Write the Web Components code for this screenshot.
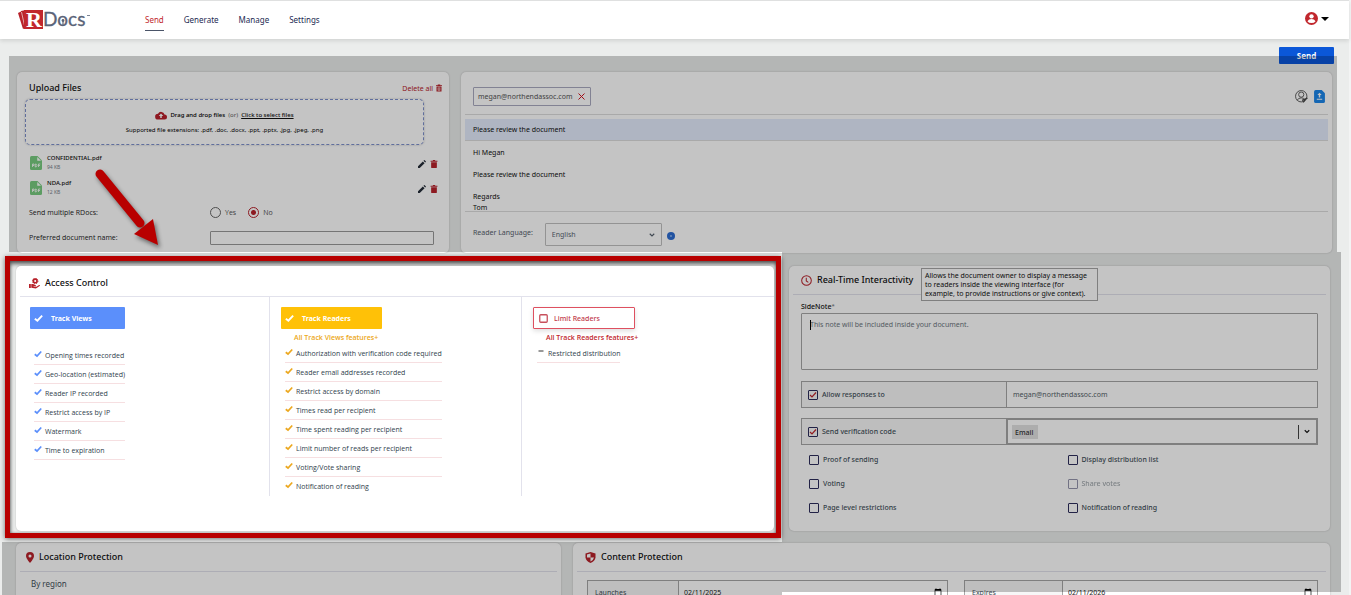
<!DOCTYPE html>
<html lang="en">
<head>
<meta charset="utf-8">
<title>RDocs – Send</title>
<style>
html{scrollbar-width:none;background:#ebedec}
body{margin:0;font-family:"Noto Sans","Open Sans",sans-serif;font-size:7px;line-height:11px;color:#111}
</style>
</head>
<body>
<rd-app></rd-app>
<script>
const base=`*{box-sizing:border-box}:host{display:block}button,input,select,textarea{font:inherit;color:inherit;margin:0}button{cursor:pointer}p,h2,ul{margin:0;padding:0}`;
function define(name,css,html,setup){
  const t=document.createElement('template');
  t.innerHTML=`<style>${base}${css}</style>${html}`;
  customElements.define(name,class extends HTMLElement{
    constructor(){super();this.attachShadow({mode:'open'}).append(t.content.cloneNode(true));}
    connectedCallback(){if(setup)setup(this,this.shadowRoot);}
  });
}
const icons={
  cloud:['0 0 24 16','<path fill="#b9202b" d="M19 6A7 7 0 0 0 6 4.500A5.600 5.600 0 0 0 6 16H19A5 5 0 0 0 19 6Z"/><path fill="#fff" d="M12 4L7.500 9H10.500V13H13.500V9H16.500Z"/>'],
  trash:['0 0 12 14','<path fill="currentColor" d="M1 4H11V12.500Q11 14 9.500 14H2.500Q1 14 1 12.500ZM0 1.500H3.500L4.500 0H7.500L8.500 1.500H12V3H0Z"/>'],
  trashbox:['0 0 12 14','<path fill="currentColor" fill-rule="evenodd" d="M1 4H11V14H1ZM3.500 6V12H8.500V6ZM0 1.300H3.500V0H8.500V1.300H12V3.200H0Z"/><path fill="currentColor" d="M5 6H7V11H5Z"/>'],
  pencil:['0 0 14 14','<path fill="#252d38" d="M0 14V11L8.500 2.500L11.500 5.500L3 14ZM9.500 1.500L10.700 .4Q11.200 0 11.700 .4L13.600 2.300Q14 2.800 13.600 3.300L12.500 4.500Z"/>'],
  pdf:['0 0 24 28','<path fill="#78cc80" d="M3 0H15L24 9V25Q24 28 21 28H3Q0 28 0 25V3Q0 0 3 0Z"/><path fill="#fff" d="M14.500 2V9.500H22Z"/><path fill="none" stroke="#fff" stroke-width="1.600" d="M5 22V16H8V19H5M10.500 16V22Q14 22 14 19T10.500 16M17 22V16H20.500M17 19H20"/>'],
  check:['0 0 16 14','<path fill="none" stroke="currentColor" stroke-width="3.400" d="M1.500 7.500L6 11L14.500 2"/>'],
  dash:['0 0 16 14','<path fill="none" stroke="#333" stroke-width="2" d="M3 5H13"/>'],
  box:['0 0 18 18','<rect x="1.500" y="1.500" width="15" height="15" rx="2" fill="none" stroke="#c8505c" stroke-width="2.600"/>'],
  access:['0 0 24 24','<circle cx="13.500" cy="6.500" r="4" fill="none" stroke="currentColor" stroke-width="3.500"/><circle cx="13.500" cy="6.500" r="6" fill="none" stroke="currentColor" stroke-width="2" stroke-dasharray="2.500 2.200"/><path fill="currentColor" d="M0 13H4V22H0ZM5 13H9L15 16V18H10V19H16L22 15.500Q24 15 24 17L15 23L5 21Z"/>'],
  clock:['0 0 24 24','<circle cx="12" cy="12" r="10.500" fill="none" stroke="currentColor" stroke-width="2.200"/><path fill="none" stroke="currentColor" stroke-width="2.200" d="M11.500 6V13L16 16"/>'],
  pin:['0 0 16 22','<path fill="currentColor" fill-rule="evenodd" d="M8 0A8 8 0 0 0 0 8C0 13 8 22 8 22S16 13 16 8A8 8 0 0 0 8 0ZM8 5A3 3 0 0 1 8 11A3 3 0 0 1 8 5Z"/>'],
  shield:['0 0 20 22','<path fill="currentColor" d="M10 0L20 3V11Q19 18 10 22Q1 18 0 11V3Z"/><path fill="#fff" d="M10 3V11H3V5ZM10 11H17Q16 16 10 19Z"/>'],
  user:['0 0 24 24','<circle cx="12" cy="12" r="12" fill="#c1272d"/><circle cx="12" cy="8" r="4" fill="#fff"/><path fill="#fff" d="M4.500 17Q7 13 12 13T19.500 17Q17 20.500 12 20.500T4.500 17Z"/>'],
  x:['0 0 14 14','<path stroke="#d0101c" stroke-width="2" d="M1 1L13 13M13 1L1 13"/>'],
  contact:['0 0 24 24','<g fill="none" stroke="#555" stroke-width="1.700"><circle cx="11.500" cy="11.500" r="10.500"/><circle cx="11.500" cy="8.500" r="4.800"/><path d="M4 19Q6 14.500 11.500 14.500T18 18"/></g><path stroke="#444" stroke-width="2.400" d="M13 19L23 15M15 23L20 17"/>'],
  contactfile:['0 0 20 24','<path fill="#1c86ea" d="M3 0H14L20 6V21Q20 24 17 24H3Q0 24 0 21V3Q0 0 3 0Z"/><path fill="#fff" d="M10 5L14 9H11.300V14H8.700V9H6ZM5 16H15V18H5Z"/>'],
  info:['0 0 16 16','<circle cx="8" cy="8" r="8" fill="#2d6cd2"/><circle cx="8" cy="8" r="2" fill="#8fb7f0"/>'],
  chev:['0 0 12 8','<path fill="none" stroke="currentColor" stroke-width="2.200" d="M1.500 1.500L6 6L10.500 1.500"/>']
};
customElements.define('rd-icon',class extends HTMLElement{
  static observedAttributes=['name'];
  constructor(){super();this.attachShadow({mode:'open'});}
  attributeChangedCallback(){
    const [box,body]=icons[this.getAttribute('name')];
    this.shadowRoot.innerHTML=`<style>:host{display:inline-flex;flex:none}svg{width:100%;height:100%;display:block}</style><svg viewBox="${box}" aria-hidden="true">${body}</svg>`;
  }
});

define('rd-header',`
:host{position:relative;background:#fff;border-top:1px solid #dfe0e0;box-shadow:0 2px 4px #0000001c}
header{display:flex;align-items:center;height:38px;padding:0 20px 0 18px}
.logo{width:74px;height:22px;margin-right:53px;overflow:visible}
nav{display:flex;gap:20px;flex:1;font-size:8px;line-height:12px}
nav a{color:#232a52;text-decoration:none;padding:5px 0 4px;border-bottom:1px solid transparent}
nav a.on{color:#c1272d;border-color:#4a5468}
button{display:flex;align-items:center;gap:3px;border:0;background:none;padding:0}
rd-icon{width:13px;height:13px;margin-bottom:3px}
i{border:4px solid transparent;border-top-color:#000;border-bottom:0;margin-bottom:3px}
`,`<header>
<svg class="logo" viewBox="0 0 74 22" role="img" aria-label="RDocs"><path fill="#b8222b" d="M0 4L4 2L7 19L5 20ZM3 2L8 1V20L6 19Z"/><path stroke="#fff" stroke-width=".6" d="M3.500 3L7 19"/><rect x="6" y="1" width="19" height="19" fill="#c1272d"/><text x="8" y="18" font-family="Liberation Serif,serif" font-weight="700" font-size="22" fill="#fff">R</text><text x="25" y="17" font-family="Lato,sans-serif" font-size="19" fill="#5a6478" stroke="#5a6478" stroke-width=".3">Docs</text><circle cx="45" cy="11.500" r="1.400" fill="#5a6478"/><path stroke="#5a6478" stroke-width="1.200" d="M45 12V16"/><path stroke="#5a6478" stroke-width=".8" d="M69 6.500H72"/></svg>
<nav aria-label="Main"><a class="on" href="#send">Send</a><a href="#generate">Generate</a><a href="#manage">Manage</a><a href="#settings">Settings</a></nav>
<button type="button" aria-label="Account"><rd-icon name="user"></rd-icon><i></i></button>
</header>`);

define('rd-card',`
:host{background:#fff;border-radius:5px;box-shadow:0 0 2px #0000003a;min-width:0}
`,`<slot></slot>`);

define('rd-heading',`
:host{margin:0 4px;border-bottom:1px solid #e2e2ec}
h2{display:flex;align-items:center;gap:5px;font-size:9px;line-height:12px;font-weight:500;color:#111;padding:var(--pt,0) 8px 0 var(--pl,8px);height:var(--h,28px)}
rd-icon{width:var(--iw,11px);height:11px;color:#b8222b}
`,`<h2><rd-icon></rd-icon><slot></slot></h2>`,(h,r)=>{
  r.querySelector('rd-icon').setAttribute('name',h.getAttribute('icon'));
});

define('rd-file',`
:host{display:flex;align-items:center;height:25px;gap:5px}
.f{width:12px;height:14px}
div{flex:1;font-size:6px;line-height:9px;font-weight:500;color:#111}
small{display:block;font-size:5px;font-weight:400;color:#77808c}
button{border:0;background:none;padding:3px 0 0;display:flex;width:7px}
rd-icon{width:8px;height:8px;color:#b8222b}
`,`<rd-icon class="f" name="pdf"></rd-icon><div><slot></slot><small><slot name="size"></slot></small></div><button type="button" aria-label="Rename"><rd-icon name="pencil"></rd-icon></button><button type="button" aria-label="Delete"><rd-icon name="trash"></rd-icon></button>`);

define('rd-upload',`
:host{padding:0 12px}
.top{display:flex;justify-content:space-between;align-items:center;height:27px;padding-top:5px;margin-right:-5px}
h2{font-size:9px;font-weight:500;line-height:12px}
.del{border:0;background:none;padding:0;color:#b8222b;font-size:7px;display:flex;align-items:center;gap:3px}
.del rd-icon{width:6px;height:8px}
.drop{margin:0 13px 0 -4px;height:46px;border:1px dashed #7e90cc;border-radius:5px;box-shadow:0 0 2px #0004;font-size:6px;display:flex;flex-direction:column;align-items:center;justify-content:center;gap:4px;color:#000;padding-top:2px}
.drop p{display:flex;align-items:center;gap:3px}
.drop p:first-child{font-weight:500}
.drop p rd-icon{width:12px;height:9px}
.drop a{color:#111}
.drop span{color:#777}
.files{padding:5px 0 0 1px}
.row{display:grid;grid-template-columns:181px 1fr;align-items:center;height:25px;margin-right:3px;font-family:"Open Sans",sans-serif;font-weight:500;color:#222}
.radios{display:flex;gap:12px}
.radios label{display:flex;align-items:center;gap:4px;font-weight:400;color:#555}
[type=radio]{appearance:none;width:11px;height:11px;border:1px solid #666;border-radius:50%}
[type=radio]:checked{border-color:#b8222b;background:radial-gradient(#b8222b 0 2px,transparent 3px)}
[type=text]{width:100%;height:14px;border:1px solid #999;background:none;border-radius:1px}
`,`<div class="top"><h2>Upload Files</h2><button class="del" type="button">Delete all<rd-icon name="trashbox"></rd-icon></button></div>
<div class="drop"><p><rd-icon name="cloud"></rd-icon>Drag and drop files <span>(or)</span> <a href="#select">Click to select files</a></p><p>Supported file extensions: .pdf, .doc, .docx, .ppt, .pptx, .jpg, .jpeg, .png</p></div>
<div class="files"><rd-file>CONFIDENTIAL.pdf<span slot="size">94 KB</span></rd-file><rd-file>NDA.pdf<span slot="size">12 KB</span></rd-file></div>
<div class="row" role="radiogroup" aria-labelledby="m"><span id="m">Send multiple RDocs:</span><div class="radios"><label><input type="radio" name="multi">Yes</label><label><input type="radio" name="multi" checked>No</label></div></div>
<div class="row"><label for="n">Preferred document name:</label><input id="n" type="text"></div>`);

define('rd-message',`
:host{padding:0 4px}
.to{display:flex;align-items:center;height:43px;padding:6px 3px 0 8px;border-bottom:1px solid #dcdcdc;gap:6px}
.chip{display:flex;align-items:center;gap:6px;height:19px;border:1px solid #a9a9c0;border-radius:1px;padding:0 5px 0 4px;margin-right:auto;color:#555}
.chip button{border:0;background:none;padding:0;display:flex}
.chip rd-icon{width:7px;height:7px}
.ib{border:0;background:none;padding:0;display:flex}
.ib rd-icon{width:13px;height:13px}
.ib:last-child rd-icon{width:11px}
.subject{display:block;width:100%;height:22px;margin-top:4px;border:0;border-bottom:1px solid #dcdcdc;background:#e4ecfd;padding:0 8px;color:#111}
.body{height:71px;overflow:hidden;padding:6px 8px 0;border-bottom:1px solid #dcdcdc;outline:0}
.body p{margin-bottom:11px}
.lang{display:flex;align-items:center;height:38px;padding-left:8px;color:#55606c;padding-top:6px}
.lang label{margin:0 12px 4px 0}
.sel{position:relative;display:flex}
select{appearance:none;width:117px;height:23px;border:1px solid #c0c0c0;background:none;border-radius:1px;padding:0 6px;color:#5a6672}
.sel rd-icon{position:absolute;right:7px;top:10px;width:6px;height:4px}
.info{width:8px;height:8px;margin:4px 0 0 5px}
`,`<div class="to"><span class="chip">megan@northendassoc.com<button type="button" aria-label="Remove recipient"><rd-icon name="x"></rd-icon></button></span><button class="ib" type="button" aria-label="Contacts"><rd-icon name="contact"></rd-icon></button><button class="ib" type="button" aria-label="Import list"><rd-icon name="contactfile"></rd-icon></button></div>
<input class="subject" aria-label="Subject" value="Please review the document">
<div class="body" role="textbox" aria-label="Message" contenteditable="true"><p>Hi Megan</p><p>Please review the document</p><p>Regards<br>Tom</p></div>
<div class="lang"><label for="l">Reader Language:</label><div class="sel"><select id="l"><option>English</option></select><rd-icon name="chev"></rd-icon></div><rd-icon class="info" name="info"></rd-icon></div>`);

define('rd-tier',`
:host{padding:10px 11px 0;border-right:1px solid #e2e2ec;min-width:0}
:host([plain]){padding-left:10px}
:host([last]){border:0}
button{display:flex;align-items:center;gap:8px;height:22px;min-width:var(--w);border:0;border-radius:1px;padding:0 4px;background:var(--tone);color:#fff;font-weight:700}
button rd-icon{width:9px;height:9px}
:host([outline]) button{background:#fff;border:1px solid #de5060;color:#c1394a;font-weight:500;padding:0 5px;gap:6px;box-shadow:0 2px 5px #0002}
.sub{font-family:"Open Sans",sans-serif;font-weight:600;line-height:11px;color:var(--tint);padding:3px 0 1px 13px}
ul{list-style:none;width:max-content;min-width:91px;padding-left:4px}
:host([last]) ul{min-width:0}
:host([plain]) ul{margin-top:17px}:host([plain]) .sub{display:none}
`,`<button type="button"><rd-icon></rd-icon><span></span></button><p class="sub"></p><ul><slot></slot></ul>`,(h,r)=>{
  const on=!h.hasAttribute('outline');
  r.querySelector('rd-icon').setAttribute('name',on?'check':'box');
  r.querySelector('button').setAttribute('aria-pressed',on);
  r.querySelector('button span').textContent=h.getAttribute('label');
  r.querySelector('.sub').textContent=h.getAttribute('sub')||'';
});

define('rd-feature',`
:host{display:flex;gap:3px;height:19px;border-bottom:1px solid #f6dfe1;font-family:"Open Sans",sans-serif;font-weight:500;line-height:20px;color:#2f414c}
:host([open]){border:0}
rd-icon{width:8px;height:8px;margin-top:4px;color:var(--tint)}
`,`<rd-icon></rd-icon><slot></slot>`,(h,r)=>{
  r.querySelector('rd-icon').setAttribute('name',h.getAttribute('icon')||'check');
});

define('rd-access',`
.cols{display:grid;grid-template-columns:250fr 252fr 248fr;margin:0 4px;height:198px}
.a{--tone:#5b8ffb;--tint:#5b8ffb;--w:95px}.b{--tone:#ffc107;--tint:#eca820;--w:101px}.c{--tint:#c1272d;--w:102px}
rd-heading{--h:30px;--pt:4px;--pl:9px;margin-right:0}
`,`<rd-heading icon="access">Access Control</rd-heading><div class="cols">
<rd-tier class="a" plain label="Track Views"><rd-feature>Opening times recorded</rd-feature><rd-feature>Geo-location (estimated)</rd-feature><rd-feature>Reader IP recorded</rd-feature><rd-feature>Restrict access by IP</rd-feature><rd-feature>Watermark</rd-feature><rd-feature>Time to expiration</rd-feature></rd-tier>
<rd-tier class="b" label="Track Readers" sub="All Track Views features+"><rd-feature>Authorization with verification code required</rd-feature><rd-feature>Reader email addresses recorded</rd-feature><rd-feature>Restrict access by domain</rd-feature><rd-feature>Times read per recipient</rd-feature><rd-feature>Time spent reading per recipient</rd-feature><rd-feature>Limit number of reads per recipient</rd-feature><rd-feature>Voting/Vote sharing</rd-feature><rd-feature open>Notification of reading</rd-feature></rd-tier>
<rd-tier class="c" outline last label="Limit Readers" sub="All Track Readers features+"><rd-feature icon="dash">Restricted distribution</rd-feature></rd-tier></div>`);

define('rd-check',`
label{display:flex;align-items:center;gap:4px;color:#43505a;line-height:11px;font-weight:500}
input{appearance:none;flex:none;width:10px;height:10px;border:1px solid #2d2d5c;border-radius:1px}
input:checked{background:url("data:image/svg+xml,%3Csvg xmlns='http://www.w3.org/2000/svg' viewBox='0 0 8 8'%3E%3Cpath d='M1 4L3 6L7 1.500' fill='none' stroke='%23c1272d' stroke-width='1.200'/%3E%3C/svg%3E")}
:host([disabled]){opacity:.5}
`,`<label><input type="checkbox"><slot></slot></label>`,(h,r)=>{
  const i=r.querySelector('input');i.checked=h.hasAttribute('checked');i.disabled=h.hasAttribute('disabled');
});

define('rd-interact',`
:host{position:relative}
.in{padding:6px 12px 0}
.lab{display:block;font-size:7px;font-weight:500;line-height:12px}
sup{font-size:6px;line-height:0;vertical-align:1px;color:#777}
textarea{display:block;width:100%;height:57px;resize:none;border:1px solid #a6a6a6;background:none;border-radius:1px;padding:5px 8px;line-height:11px}
textarea::placeholder{color:#6e7780}
.pair{display:grid;grid-template-columns:205px 1fr;height:27px;margin-top:11px;border:1px solid #a6a6a6}
.pair+.pair{margin-top:10px}
.k{display:flex;align-items:center;padding-left:6px;background:#f7f7f7;border-right:1px solid #a6a6a6}
.pair input{border:0;background:none;padding:0 6px;color:#555f68;min-width:0}
.ms{display:flex;align-items:center;padding:0 6px 0 4px;border:1px solid #a6a6a6}
.ms span{background:#e2e2e2;padding:2px 5px 1px 3px;color:#333;font-weight:500;margin-right:auto}
.ms button{border:0;border-left:1px solid #444;background:none;padding:0 0 0 5px;height:14px;display:flex;align-items:center}
.ms rd-icon{width:6px;height:5px}
.opts{display:grid;grid-template-columns:1fr 1fr;row-gap:13px;padding:9px 0 0 8px;margin-right:-8px}
.tip{position:absolute;left:132px;top:2px;width:177px;background:#fff;border:1px solid #a6a6a6;padding:2px 3px;line-height:9px;z-index:1}
.ta{position:relative}
.caret{position:absolute;left:9px;top:7px;width:1px;height:10px;background:#000}
`,`<rd-heading icon="clock">Real-Time Interactivity</rd-heading>
<div class="tip" role="tooltip">Allows the document owner to display a message to readers inside the viewing interface (for example, to provide instructions or give context).</div>
<div class="in"><label class="lab" for="s">SideNote<sup>*</sup></label><div class="ta"><textarea id="s" placeholder="This note will be included inside your document."></textarea><i class="caret"></i></div>
<div class="pair"><div class="k"><rd-check checked>Allow responses to</rd-check></div><input type="email" aria-label="Responses address" value="megan@northendassoc.com"></div>
<div class="pair"><div class="k"><rd-check checked>Send verification code</rd-check></div><div class="ms"><span>Email</span><button type="button" aria-label="Choose channel"><rd-icon name="chev"></rd-icon></button></div></div>
<div class="opts"><rd-check>Proof of sending</rd-check><rd-check>Display distribution list</rd-check><rd-check>Voting</rd-check><rd-check disabled>Share votes</rd-check><rd-check>Page level restrictions</rd-check><rd-check>Notification of reading</rd-check></div></div>`);

define('rd-location',`rd-heading{--iw:8px;--pl:6px}p{padding:6px 15px;color:#43505a;font-size:8px}`,`<rd-heading icon="pin">Location Protection</rd-heading><p>By region</p>`);

define('rd-date',`
:host{display:grid;grid-template-columns:var(--k) 1fr;height:24px;border:1px solid #a6a6a6;min-width:0}
label{display:flex;align-items:center;padding-left:7px;background:#f7f7f7;border-right:1px solid #a6a6a6;color:#43505a}
input{border:0;background:none;padding:0 5px;min-width:0;color:#222}
input::-webkit-datetime-edit-fields-wrapper,input::-webkit-datetime-edit,input::-webkit-datetime-edit-text,input::-webkit-datetime-edit-month-field,input::-webkit-datetime-edit-day-field,input::-webkit-datetime-edit-year-field{padding:0}
input::-webkit-calendar-picker-indicator{width:8px;height:8px;padding:0}
`,`<label for="d"></label><input id="d" type="date">`,(h,r)=>{
  r.querySelector('label').textContent=h.getAttribute('label');r.querySelector('input').value=h.getAttribute('value');
});
define('rd-content',`.d{display:grid;grid-template-columns:361fr 354fr;gap:16px;padding:8px 12px 0 14px}.l{--k:91px}.e{--k:98px}`,`<rd-heading icon="shield">Content Protection</rd-heading><div class="d"><rd-date class="l" label="Launches" value="2025-02-11"></rd-date><rd-date class="e" label="Expires" value="2026-02-11"></rd-date></div>`);

define('rd-app',`
:host{position:relative;border-right:2px solid #f3f4f4}
.bar{display:flex;justify-content:flex-end;padding:8px 15px 0}
.bar button{width:55px;height:17px;border:0;border-radius:1px;background:#0b57d8;color:#fff;font-size:8px;font-weight:700;padding:0}
.dim{position:absolute;inset:0;background:#0000003b;pointer-events:none;z-index:2}
.compose{position:relative;display:grid;grid-template-columns:432fr 871fr;gap:12px;margin:-8px 12px 0 9px;padding:16px 5px 0 8px;height:196px}
.compose rd-card{height:181px}
.lower{margin:0 8px 0 2px}
.mid{position:relative;display:grid;grid-template-columns:776fr 559fr;gap:1px;padding-left:3px;height:290px}
.focus{position:relative;z-index:3;margin:4px 0;border:5px solid #b80000;padding:5px 2px 1px 6px;box-shadow:0 1px 5px #0008,inset 0 3px 4px #0009,inset 0 0 3px #0005;background:#ebedec}
.focus rd-card{height:265px}
.right{position:relative;padding:14px 11px 11px 7px}
.right rd-card{height:265px}
.right .dim{bottom:-50px}
.bottom{position:relative;display:grid;grid-template-columns:545fr 757fr;gap:12px;padding:1px 11px 0 14px}
.bottom rd-card{height:66px}
.bottom .dim{right:auto;width:58.25%}
.arrow{position:absolute;left:90px;top:165px;width:80px;height:90px;z-index:4;filter:drop-shadow(2px 3px 2px #0007);pointer-events:none}
`,`<rd-header></rd-header>
<div class="bar"><button type="submit">Send</button></div>
<main>
<section class="compose"><rd-card><rd-upload></rd-upload></rd-card><rd-card><rd-message></rd-message></rd-card><div class="dim"></div></section>
<div class="lower">
<section class="mid"><div class="focus"><rd-card><rd-access></rd-access></rd-card></div><div class="right"><rd-card><rd-interact></rd-interact></rd-card><div class="dim"></div></div></section>
<section class="bottom"><rd-card><rd-location></rd-location></rd-card><rd-card><rd-content></rd-content></rd-card><div class="dim"></div></section>
</div></main>
<svg class="arrow" viewBox="0 0 80 90" aria-hidden="true"><path d="M10 9L50 58" stroke="#b80000" stroke-width="9" stroke-linecap="round"/><path fill="#b80000" d="M68 80L44 69L63 54Z"/></svg>`);
</script>
</body>
</html>
